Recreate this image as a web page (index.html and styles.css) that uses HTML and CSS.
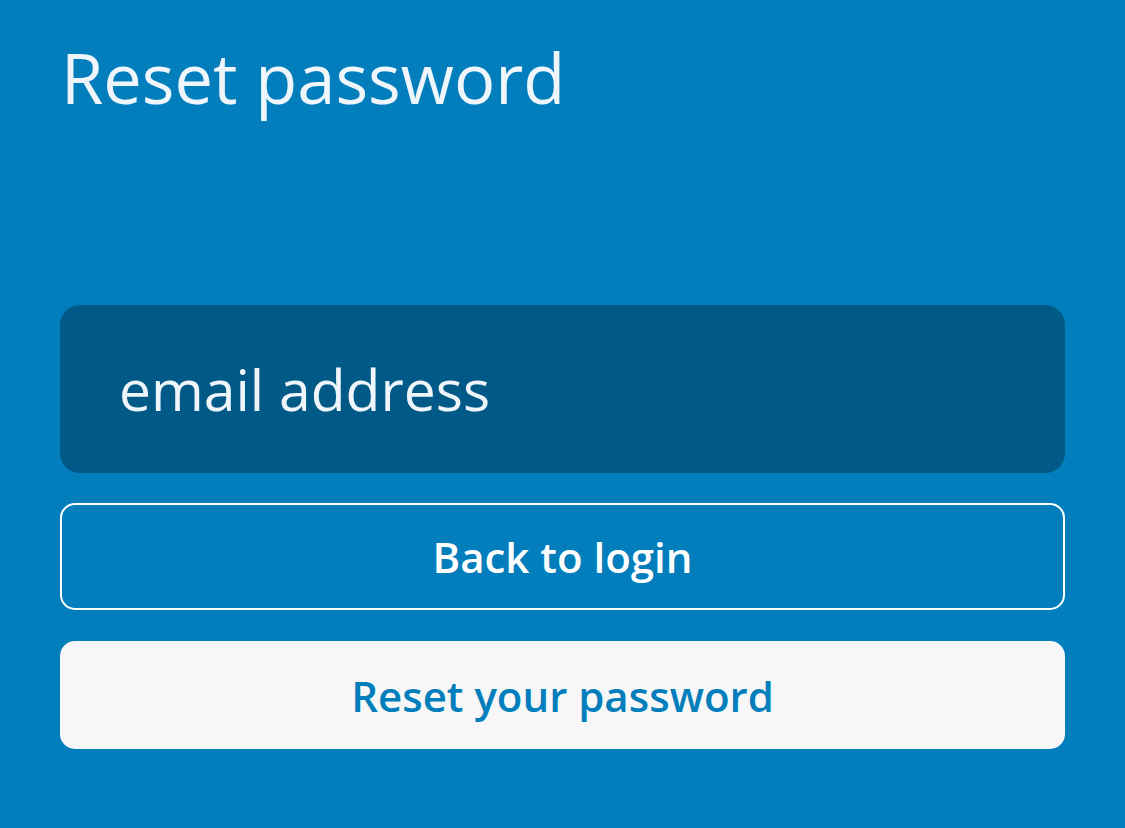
FILE: index.html
```html
<!DOCTYPE html>
<html lang="en">
<head>
  <meta charset="UTF-8">
  <meta name="viewport" content="width=device-width, initial-scale=1.0">
  <title>Reset password</title>
  <link rel="stylesheet" href="styles.css">
</head>
<body>

  <div class="container">
    <h1>Reset password</h1>
    <form id="resetForm" class="reset-form">
      <input type="email" id="email" class="email-input" placeholder="email address">
      <button type="button" class="btn btn-outline">Back to login</button>
      <button type="submit" class="btn btn-solid">Reset your password</button>
    </form>
  </div>

</body>
</html>
```

FILE: styles.css
```css
html, body {
  margin: 0;
  height: 100%;
}

body {
  font-family: "Open Sans", "Noto Sans", sans-serif;
  background-color: #027ebc;
  color: #eef5fb;
}

.container {
  padding: 31px 60px 0;
}

h1 {
  margin: 0 0 181px 1px;
  font-size: 68.6px;
  font-weight: 400;
  line-height: 93px;
}

.reset-form {
  display: flex;
  flex-direction: column;
  gap: 31px;
}

.email-input {
  box-sizing: border-box;
  width: 100%;
  height: 168px;
  padding: 0 59px;
  border: none;
  border-radius: 20px;
  background-color: #005986;
  font-family: inherit;
  font-size: 57px;
  color: #eef5fb;
  outline: none;
}

.email-input::placeholder {
  color: #eef5fb;
  opacity: 1;
}

.btn {
  box-sizing: border-box;
  width: 100%;
  height: 107px;
  border-radius: 15px;
  font-family: inherit;
  font-size: 42px;
  font-weight: 600;
  cursor: pointer;
}

.btn-outline {
  margin-top: -1px;
  background-color: transparent;
  border: 2.5px solid #fff;
  color: #fff;
}

.btn-solid {
  height: 108px;
  border: none;
  background-color: #f7f7f7;
  color: #027ebc;
}
```
